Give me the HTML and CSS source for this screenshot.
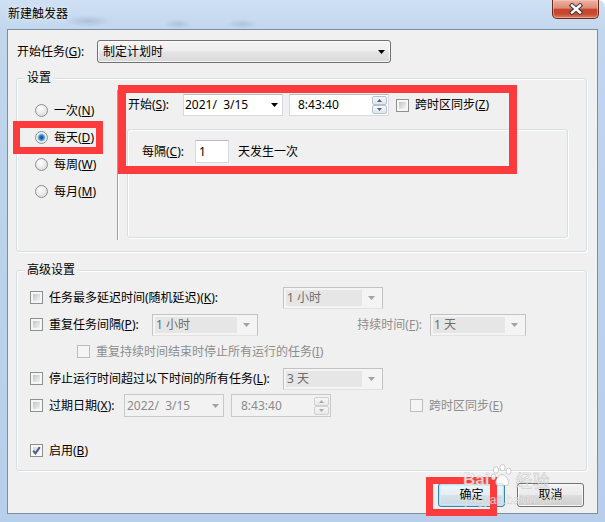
FILE: index.html
```html
<!DOCTYPE html>
<html lang="zh-CN">
<head>
<meta charset="utf-8">
<title>新建触发器</title>
<link rel="stylesheet" href="styles.css">
</head>
<body>
<div class="window">
  <div class="titlebar">
    <span class="title">新建触发器</span>
    <div class="close-btn">
      <svg width="14" height="12" viewBox="0 0 14 12"><path d="M3 2.5 L11 9.5 M11 2.5 L3 9.5" stroke="#3a3a3a" stroke-width="4.4" stroke-linecap="square"/><path d="M3 2.5 L11 9.5 M11 2.5 L3 9.5" stroke="#fff" stroke-width="2.4" stroke-linecap="square"/></svg>
    </div>
  </div>
  <div class="client">
    <div class="start-row">
      <span class="start-lbl">开始任务(<u>G</u>):</span>
      <div class="combo"><span>制定计划时</span><svg width="7" height="4" viewBox="0 0 7 4"><path d="M0 0H7L3.5 4Z" fill="#000"/></svg></div>
    </div>

    <div class="group settings">
      <div class="legend">设置</div>
      <div class="settings-body">
        <div class="radios">
          <div class="radio-row"><span class="radio"></span><span>一次(<u>N</u>)</span></div>
          <div class="radio-row"><span class="radio on"></span><span>每天(<u>D</u>)</span></div>
          <div class="radio-row"><span class="radio"></span><span>每周(<u>W</u>)</span></div>
          <div class="radio-row"><span class="radio"></span><span>每月(<u>M</u>)</span></div>
        </div>
        <div class="sep"></div>
        <div class="schedule">
          <div class="start-line">
            <span class="start-s">开始(<u>S</u>):</span>
            <div class="field date"><span class="val">2021/  3/15</span><svg width="7" height="4" viewBox="0 0 7 4"><path d="M0 0H7L3.5 4Z" fill="#000"/></svg></div>
            <div class="field time"><span class="val">8:43:40</span>
              <div class="spin">
                <b><svg width="5" height="3" viewBox="0 0 5 3"><path d="M0 3H5L2.5 0Z" fill="#4b5f86"/></svg></b>
                <b><svg width="5" height="3" viewBox="0 0 5 3"><path d="M0 0H5L2.5 3Z" fill="#4b5f86"/></svg></b>
              </div>
            </div>
            <span class="cb tz"></span><span class="cb-txt">跨时区同步(<u>Z</u>)</span>
          </div>
          <div class="panel">
            <div class="every-row">
              <span class="every-lbl">每隔(<u>C</u>):</span>
              <div class="field num"><span class="val">1</span></div>
              <span class="every-txt">天发生一次</span>
            </div>
          </div>
        </div>
      </div>
    </div>

    <div class="group advanced">
      <div class="legend">高级设置</div>
      <div class="adv-body">
        <div class="adv-row">
          <span class="cb"></span><span class="txt w-delay">任务最多延迟时间(随机延迟)(<u>K</u>):</span>
          <div class="dcombo w-100"><span class="v">1 小时</span><span class="a"><svg width="7" height="4" viewBox="0 0 7 4"><path d="M0 0H7L3.5 4Z" fill="#a2a2a2"/></svg></span></div>
        </div>
        <div class="adv-row">
          <span class="cb"></span><span class="txt w-repeat">重复任务间隔(<u>P</u>):</span>
          <div class="dcombo w-106"><span class="v">1 小时</span><span class="a"><svg width="7" height="4" viewBox="0 0 7 4"><path d="M0 0H7L3.5 4Z" fill="#a2a2a2"/></svg></span></div>
          <span class="dis-txt dur">持续时间(<u>F</u>):</span>
          <div class="dcombo w-96"><span class="v">1 天</span><span class="a"><svg width="7" height="4" viewBox="0 0 7 4"><path d="M0 0H7L3.5 4Z" fill="#a2a2a2"/></svg></span></div>
        </div>
        <div class="adv-row indent">
          <span class="cb dis"></span><span class="txt dis-txt">重复持续时间结束时停止所有运行的任务(<u>I</u>)</span>
        </div>
        <div class="adv-row">
          <span class="cb"></span><span class="txt w-delay">停止运行时间超过以下时间的所有任务(<u>L</u>):</span>
          <div class="dcombo w-100"><span class="v">3 天</span><span class="a"><svg width="7" height="4" viewBox="0 0 7 4"><path d="M0 0H7L3.5 4Z" fill="#a2a2a2"/></svg></span></div>
        </div>
        <div class="adv-row">
          <span class="cb"></span><span class="txt w-expire">过期日期(<u>X</u>):</span>
          <div class="field dis-field date"><span class="val">2022/  3/15</span><svg width="7" height="4" viewBox="0 0 7 4"><path d="M0 0H7L3.5 4Z" fill="#a2a2a2"/></svg></div>
          <div class="field dis-field time"><span class="val">8:43:40</span>
            <div class="spin dis-spin">
              <b><svg width="5" height="3" viewBox="0 0 5 3"><path d="M0 3H5L2.5 0Z" fill="#a8a8a8"/></svg></b>
              <b><svg width="5" height="3" viewBox="0 0 5 3"><path d="M0 0H5L2.5 3Z" fill="#a8a8a8"/></svg></b>
            </div>
          </div>
          <span class="cb dis tz2"></span><span class="cb-txt dis-txt">跨时区同步(<u>E</u>)</span>
        </div>
        <div class="adv-row enable">
          <span class="cb checked"><svg width="11" height="11" viewBox="0 0 11 11"><path d="M2.2 5.6 L4.4 8.3 L8.8 2.2" fill="none" stroke="#4a5a8c" stroke-width="2"/></svg></span><span class="txt">启用(<u>B</u>)</span>
        </div>
      </div>
    </div>

    <div class="buttons">
      <div class="btn default">确定</div>
      <div class="btn">取消</div>
    </div>
  </div>

  <div class="mark mark-daily"></div>
  <div class="mark mark-start"></div>
  <div class="mark mark-ok"></div>

  <div class="wm" aria-hidden="true">
    <div class="wm-top">
      <span class="wm-bai">Bai</span>
      <svg class="wm-paw" width="24" height="24" viewBox="0 0 24 24"><g fill="rgba(255,255,255,.8)" stroke="rgba(140,140,140,.5)" stroke-width=".8"><ellipse cx="6" cy="6" rx="2.6" ry="3.3"/><ellipse cx="12.5" cy="3.6" rx="2.5" ry="3.2"/><ellipse cx="18.6" cy="7.2" rx="2.5" ry="3.1"/><ellipse cx="3.4" cy="13" rx="2.3" ry="2.9"/><path d="M12 10.5c-3.2 0-6.5 5-6.5 8.2 0 2.6 2.5 3.4 6.5 2.4 4 1 6.7 .2 6.7-2.4 0-3.2-3.5-8.2-6.7-8.2z"/></g></svg>
      <span class="wm-jy">经验</span>
    </div>
    <div class="wm-url">jingyan.baidu.com</div>
  </div>
</div>
</body>
</html>
```

FILE: styles.css
```css
* { box-sizing: border-box; }
html, body { margin: 0; padding: 0; }
body {
  width: 605px;
  height: 522px;
  overflow: hidden;
  background: #ffffff;
  font-family: "Noto Sans", "Noto Sans CJK SC", sans-serif;
  font-size: 12px;
  line-height: 16px;
  color: #000;
}
u { text-decoration: underline; text-underline-offset: 1px; }

.window {
  position: relative;
  width: 605px;
  height: 522px;
  display: flex;
  flex-direction: column;
  border-top-right-radius: 7px;
  background:
    radial-gradient(ellipse 24px 6px at 88px 21px, rgba(70,100,140,.20), transparent),
    radial-gradient(ellipse 14px 5px at 178px 24px, rgba(70,100,140,.18), transparent),
    radial-gradient(ellipse 16px 5px at 242px 24px, rgba(70,100,140,.18), transparent),
    linear-gradient(#cfe0f3 0, #c2d7ee 30px, #bcd3ec 200px, #b7cfea 100%);
}

.titlebar {
  height: 29px;
  flex: none;
  display: flex;
  align-items: flex-start;
  padding-left: 8px;
}
.title {
  margin-top: 6px;
  color: #000;
  text-shadow: 0 0 5px rgba(255,255,255,.9);
}
.close-btn {
  margin-left: auto;
  margin-right: 6px;
  width: 47px;
  height: 19px;
  border: 1px solid #6b2a1f;
  border-top: none;
  border-radius: 0 0 5px 5px;
  background: linear-gradient(#eeb2a3 0%, #dc8c77 45%, #c6442b 52%, #c84a30 78%, #dd7f60 100%);
  box-shadow: inset 0 0 0 1px rgba(255,215,200,.45);
  display: flex;
  align-items: center;
  justify-content: center;
}

.client {
  flex: none;
  margin: 0 7px;
  height: 485px;
  border: 1px solid #7d8da2;
  background: #f0f0f0;
  display: flex;
  flex-direction: column;
}

/* top row */
.start-row {
  display: flex;
  align-items: center;
  height: 23px;
  margin-top: 10px;
  padding-left: 9px;
}
.start-lbl { width: 80px; flex: none; }
.combo {
  width: 294px;
  height: 23px;
  border: 1px solid #707070;
  border-radius: 3px;
  background: linear-gradient(#f5f5f5 0%, #eeeeee 48%, #e4e4e4 52%, #dadada 100%);
  box-shadow: inset 0 0 0 1px rgba(255,255,255,.75);
  display: flex;
  align-items: center;
  justify-content: space-between;
  padding: 0 5px 0 5px;
}

/* group boxes */
.group {
  margin-left: 8px;
  width: 571px;
  border: 1px solid #d5dfe5;
  border-radius: 3px;
  box-shadow: inset 1px 1px 0 #fff, 1px 1px 0 #fff;
}
.legend {
  width: fit-content;
  margin: -9px 0 -7px 8px;
  padding: 0 2px;
  background: #f0f0f0;
}
.settings { margin-top: 15px; height: 174px; }
.settings-body { display: flex; height: 172px; }

.radios { flex: none; width: 100px; padding: 18px 0 0 18px; }
.radio-row { display: flex; align-items: center; gap: 6px; height: 27px; }
.radio {
  flex: none;
  width: 13px;
  height: 13px;
  border-radius: 50%;
  border: 1px solid #8e8f8f;
  background: radial-gradient(circle at 40% 35%, #ffffff 0, #ececec 45%, #cdd0d4 100%);
}
.radio.on {
  background: radial-gradient(circle at 50% 50%, #0a4f8c 0, #1f6fb3 1.5px, #59a1dc 3px, #a9cfee 3.7px, #f2f2f2 4.4px, #e2e2e2 100%);
}

.sep {
  flex: none;
  width: 2px;
  margin: 11px 0;
  border-left: 1px solid #a0a0a0;
  border-right: 1px solid #ffffff;
}
.schedule { flex: 1; padding: 15px 0 0 8px; }
.start-line { display: flex; align-items: center; height: 22px; padding-left: 1px; }
.start-s { width: 55px; flex: none; }

.field {
  flex: none;
  display: flex;
  align-items: center;
  background: #fff;
  border: 1px solid #d6d9df;
  border-top-color: #b9bcc2;
  white-space: pre;
}
.date { width: 100px; height: 22px; padding: 0 4px 0 1px; justify-content: space-between; }
.time { width: 100px; height: 22px; margin-left: 6px; padding: 0 1px 0 8px; justify-content: space-between; }
.spin { display: flex; flex-direction: column; }
.spin b {
  display: flex;
  align-items: center;
  justify-content: center;
  width: 15px;
  height: 9px;
  border: 1px solid #b7c2d0;
  border-radius: 2px;
  background: linear-gradient(#f7f9fb, #dfe5ec);
}
.tz { margin-left: 7px; }
.cb-txt { margin-left: 6px; }

.panel {
  margin-top: 13px;
  width: 441px;
  height: 109px;
  border: 1px solid #d5dfe5;
  border-radius: 3px;
  box-shadow: inset 1px 1px 0 #fff, 1px 1px 0 #fff;
  padding: 10px 0 0 14px;
}
.every-row { display: flex; align-items: center; height: 23px; }
.every-lbl { width: 53px; flex: none; }
.num { width: 34px; height: 23px; padding-left: 3px; }
.every-txt { margin-left: 9px; }

/* checkbox */
.cb {
  flex: none;
  width: 13px;
  height: 13px;
  border: 1px solid #8e8f8f;
  background: linear-gradient(135deg, #c0c4ca, #f4f4f4) 2px 2px / 7px 7px no-repeat, #f6f6f6;
  display: flex;
  align-items: center;
  justify-content: center;
}
.cb.dis {
  border-color: #bdbdbd;
  background: #f4f4f4;
}
.cb.checked { background: linear-gradient(135deg, #d6d9dd, #f6f6f6) 2px 2px / 7px 7px no-repeat, #f8f8f8; }
.cb.checked svg { flex: none; }

/* advanced */
.advanced { margin-top: 18px; height: 201px; }
.adv-body { padding: 13px 0 0 13px; }
.adv-row { display: flex; align-items: center; height: 27px; }
.adv-row .txt { margin-left: 6px; flex: none; }
.w-delay { width: 234px; }
.w-repeat { width: 103px; }
.w-expire { width: 75px; }
.indent { padding-left: 47px; }
.dis-txt { color: #8d8d8d; }
.dur { width: 172px; text-align: right; padding-right: 8px; flex: none; }
.enable { margin-top: 18px; }

.dcombo {
  flex: none;
  height: 22px;
  display: flex;
  align-items: stretch;
  padding: 2px 1px 2px 2px;
  border: 1px solid #c3c3c3;
  border-bottom-color: #e2e2e2;
  background: #f4f4f4;
  color: #6d6d6d;
}
.dcombo .v { flex: 1; background: #e6e6e6; padding-left: 1px; line-height: 16px; }
.dcombo .a { width: 19px; flex: none; display: flex; align-items: center; justify-content: center; }
.w-100 { width: 100px; }
.w-106 { width: 106px; }
.w-96 { width: 96px; }

.dis-field {
  background: #f2f2f2;
  border-color: #c8c8c8;
  color: #8a8a8a;
}
.adv-row .dis-field.date { height: 23px; padding-left: 2px; }
.adv-row .dis-field.time { height: 23px; margin-left: 7px; padding-left: 9px; }
.dis-spin b { border-color: #d0d0d0; background: linear-gradient(#f6f6f6, #e8e8e8); }
.tz2 { margin-left: 79px; }

/* buttons */
.buttons {
  display: flex;
  justify-content: flex-end;
  gap: 12px;
  margin-top: 12px;
  padding-right: 13px;
}
.btn {
  width: 67px;
  height: 24px;
  border: 1px solid #707070;
  border-radius: 3px;
  background: linear-gradient(#f2f2f2 0%, #ebebeb 48%, #dddddd 52%, #cfcfcf 100%);
  box-shadow: inset 0 0 0 1px #fbfbfb;
  display: flex;
  align-items: center;
  justify-content: center;
}
.btn.default {
  border-color: #3c7fb1;
  box-shadow: inset 0 0 0 1px #b4e4f6, inset 0 0 0 2px rgba(200,238,250,.6);
  background: linear-gradient(#eef6fa 0%, #e4eef3 48%, #d6e3ea 52%, #cbd8df 100%);
}

/* annotation marks */
.mark { position: absolute; border: 7px solid #fc3b3c; }
.mark-daily { left: 13px; top: 121px; width: 90px; height: 33px; }
.mark-start { left: 118px; top: 85px; width: 399px; height: 89px; border-width: 8px; }
.mark-ok { left: 426px; top: 477px; width: 71px; height: 39px; }

/* watermark */
.wm {
  position: absolute;
  left: 463px;
  top: 462px;
  color: rgba(255,255,255,.75);
  pointer-events: none;
}
.wm-top { display: flex; align-items: flex-end; height: 27px; }
.wm-bai {
  font-family: "Liberation Sans", sans-serif;
  font-weight: bold;
  font-size: 17px;
  line-height: 17px;
  -webkit-text-stroke: .5px rgba(130,130,130,.45);
  margin-bottom: 1px;
}
.wm-paw { margin: 0 1px 1px 1px; }
.wm-jy {
  font-family: "Noto Sans CJK SC", sans-serif;
  font-size: 17px;
  line-height: 18px;
  -webkit-text-stroke: .5px rgba(130,130,130,.45);
}
.wm-url {
  font-family: "Liberation Sans", sans-serif;
  font-size: 12px;
  line-height: 14px;
  margin-top: 4px;
  margin-left: 2px;
  -webkit-text-stroke: .4px rgba(130,130,130,.4);
}
```
